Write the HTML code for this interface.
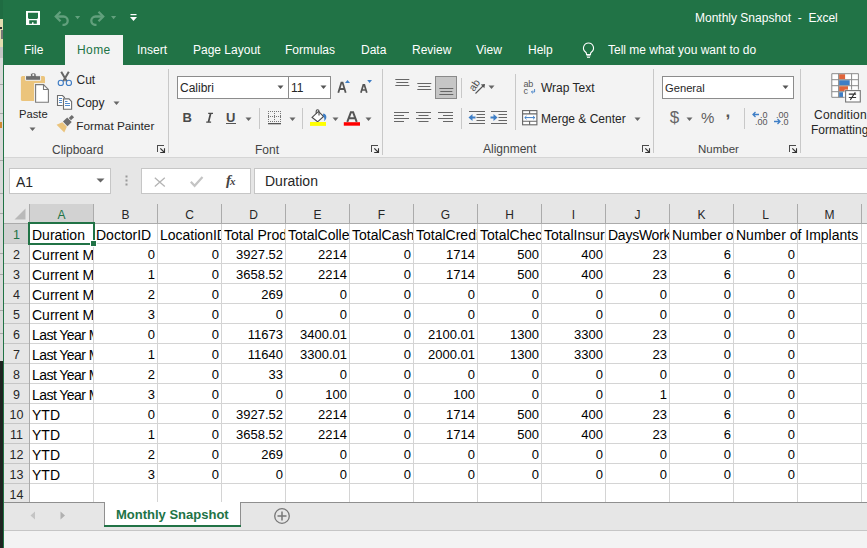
<!DOCTYPE html>
<html><head><meta charset="utf-8">
<style>
*{margin:0;padding:0;box-sizing:border-box}
html,body{width:867px;height:548px;overflow:hidden;background:#f3f3f3;font-family:"Liberation Sans",sans-serif;color:#262626}
.a{position:absolute}
#left{position:absolute;left:0;top:0;width:3px;height:548px;background:#dadada}
#gline{position:absolute;left:3px;top:0;width:1px;height:548px;background:#217346}
#title{position:absolute;left:4px;top:0;width:863px;height:65px;background:#217346}
.tab{position:absolute;top:42px;font-size:12px;color:#fff;white-space:nowrap;line-height:16px}
.rb{position:absolute;font-size:12px;color:#262626;white-space:nowrap;line-height:14px}
.gl{position:absolute;font-size:12px;color:#444;white-space:nowrap;line-height:14px}
.sep{position:absolute;width:1px;background:#c8c8c8}
#fbar{position:absolute;left:4px;top:158px;width:863px;height:46px;background:#e6e6e6}
#grid{position:absolute;left:4px;top:204px;width:863px;height:299px;background:#fff}
.t{position:absolute;height:19px;font-size:14px;line-height:19px;color:#000;white-space:nowrap;font-family:"Liberation Sans",sans-serif}
.cl{overflow:hidden;padding-left:2px}
.r{text-align:right;padding-right:2px;font-size:13px}
.hd{position:absolute;font-size:14px;line-height:19px;color:#262626;text-align:center}
</style></head><body>
<div id="left"></div>
<div class="a" style="left:0;top:0;width:3px;height:19px;background:#1f6c42"></div>
<div class="a" style="left:0;top:19px;width:3px;height:28px;background:#e3ddb0"></div>
<div class="a" style="left:0;top:27px;width:2px;height:2px;background:#333"></div>
<div class="a" style="left:1px;top:30px;width:2px;height:9px;background:#777"></div>
<div class="a" style="left:0;top:47px;width:3px;height:11px;background:#c4c4c4"></div>
<div class="a" style="left:0;top:361px;width:3px;height:187px;background:#1f2421"></div>
<div class="a" style="left:0;top:84px;width:3px;height:1px;background:#a8a8a8"></div>
<div class="a" style="left:0;top:113px;width:3px;height:1px;background:#a8a8a8"></div>
<div class="a" style="left:0;top:160px;width:3px;height:1px;background:#a8a8a8"></div>
<div class="a" style="left:0;top:193px;width:3px;height:1px;background:#a8a8a8"></div>
<div class="a" style="left:0;top:213px;width:3px;height:1px;background:#a8a8a8"></div>
<div class="a" style="left:0;top:253px;width:3px;height:1px;background:#a8a8a8"></div>
<div class="a" style="left:0;top:274px;width:3px;height:1px;background:#a8a8a8"></div>
<div class="a" style="left:0;top:310px;width:3px;height:1px;background:#a8a8a8"></div>
<div class="a" style="left:0;top:333px;width:3px;height:1px;background:#a8a8a8"></div>
<div class="a" style="left:0;top:122px;width:2px;height:6px;background:#d08a30"></div>

<div id="title"></div>
<div id="gline"></div>
<!-- QAT -->
<svg class="a" style="left:26px;top:11px" width="14" height="14" viewBox="0 0 14 14">
 <rect x="0" y="0" width="14" height="14" fill="#fff"/>
 <path d="M2 1.8h10v5.2l-1 1h-8l-1-1z" fill="#217346"/>
 <path d="M3.2 9.2h7.6v3.5h-3.3v-1.5h-1.5v1.5h-2.8z" fill="#217346"/>
</svg>
<svg class="a" style="left:53px;top:10px" width="30" height="16" viewBox="0 0 30 16">
 <path d="M3 6.5h7.5a4.2 4.2 0 0 1 0 8.4h-1" fill="none" stroke="#62a07d" stroke-width="2.3"/>
 <path d="M7.5 1.8L2.8 6.5 7.5 11.2" fill="none" stroke="#62a07d" stroke-width="2.3"/>
 <path d="M22 6h5.2l-2.6 3.2z" fill="#62a07d"/>
</svg>
<svg class="a" style="left:90px;top:10px" width="30" height="16" viewBox="0 0 30 16">
 <path d="M13 6.5h-7.5a4.2 4.2 0 0 0 0 8.4h1" fill="none" stroke="#62a07d" stroke-width="2.3"/>
 <path d="M8.5 1.8l4.7 4.7-4.7 4.7" fill="none" stroke="#62a07d" stroke-width="2.3"/>
 <path d="M21 6h5.2l-2.6 3.2z" fill="#62a07d"/>
</svg>
<svg class="a" style="left:130px;top:14px" width="8" height="8" viewBox="0 0 8 8">
 <rect x="0.5" y="0" width="6" height="1.2" fill="#fff"/><path d="M0 3h7l-3.5 4z" fill="#fff"/>
</svg>
<div class="a" style="left:695px;top:10px;font-size:12px;color:#fff;white-space:pre;line-height:16px">Monthly Snapshot  -  Excel</div>
<!-- tabs -->
<div class="a" style="left:65px;top:35px;width:58px;height:31px;background:#f3f3f3"></div>
<div class="tab" style="left:24px">File</div>
<div class="tab" style="left:77px;color:#217346;letter-spacing:0.4px">Home</div>
<div class="tab" style="left:137px">Insert</div>
<div class="tab" style="left:193px">Page Layout</div>
<div class="tab" style="left:285px">Formulas</div>
<div class="tab" style="left:361px">Data</div>
<div class="tab" style="left:412px">Review</div>
<div class="tab" style="left:476px">View</div>
<div class="tab" style="left:528px">Help</div>
<svg class="a" style="left:581px;top:42px" width="15" height="16" viewBox="0 0 15 16">
 <path d="M7.5 1a5 5 0 0 0-3 9c.6.5 1 1.2 1 2v.5h4V12c0-.8.4-1.5 1-2a5 5 0 0 0-3-9z" fill="none" stroke="#fff" stroke-width="1.1"/>
 <path d="M5.5 13.8h4M6 15.3h3" stroke="#fff" stroke-width="1"/>
</svg>
<div class="tab" style="left:608px">Tell me what you want to do</div>
<!-- ribbon bottom -->
<div class="a" style="left:4px;top:157px;width:863px;height:1px;background:#d5d5d5"></div>
<!-- Clipboard group -->
<svg class="a" style="left:16px;top:68px" width="36" height="38" viewBox="0 0 36 38">
 <rect x="4.9" y="8" width="24.1" height="25" rx="1.6" fill="#ebc47c"/>
 <path d="M9.5 7.7h5v-1.2a1.6 1.6 0 0 1 1.6-1.6h2.4a1.6 1.6 0 0 1 1.6 1.6v1.2h4.5v4.6h-15z" fill="#6d6d6d" stroke="#f3f3f3" stroke-width="1"/>
 <circle cx="17.3" cy="7" r="1.1" fill="#f3f3f3"/>
 <rect x="18.1" y="15.1" width="15.8" height="20.6" fill="#f3f3f3"/>
 <path d="M19.6 16.6h7.9l4.9 4.9v12.7h-12.8z" fill="#fff" stroke="#7a7a7a" stroke-width="1.1"/>
 <path d="M27.5 16.6v4.9h4.9" fill="none" stroke="#7a7a7a" stroke-width="1.1"/>
</svg>
<div class="rb" style="left:19px;top:107.3px;font-size:11.2px">Paste</div>
<svg class="a" style="left:29px;top:127px" width="7" height="5"><path d="M0.5 0.5h6l-3 3.5z" fill="#666"/></svg>
<svg class="a" style="left:57px;top:70px" width="17" height="18" viewBox="0 0 17 18">
 <path d="M4.2 1.8l5.6 9.4M11.8 1.8l-5.6 9.4" stroke="#666" stroke-width="2"/>
 <circle cx="3.8" cy="12.9" r="2.6" fill="#f3f3f3" stroke="#3f7cc4" stroke-width="1.1"/>
 <circle cx="11.9" cy="12.9" r="2.6" fill="#f3f3f3" stroke="#3f7cc4" stroke-width="1.1"/>
</svg>
<div class="rb" style="left:76.5px;top:72.6px">Cut</div>
<svg class="a" style="left:56px;top:94px" width="18" height="16" viewBox="0 0 18 16">
 <path d="M1.5 1.5h5l2 2v8h-7z" fill="#fff" stroke="#6e6e6e" stroke-width="1.1"/>
 <path d="M3 4.5h3M3 6.5h3M3 8.5h3" stroke="#3e7ec6" stroke-width="0.9"/>
 <rect x="6.6" y="4" width="10" height="11.2" fill="#f3f3f3"/>
 <path d="M7.5 4.9h5.5l2.6 2.6v7.7h-8.1z" fill="#fff" stroke="#6e6e6e" stroke-width="1.1"/>
 <path d="M9 7.5h2.5M9 9.5h5M9 11.5h5" stroke="#3e7ec6" stroke-width="0.9"/>
</svg>
<div class="rb" style="left:76.5px;top:95.6px">Copy</div>
<svg class="a" style="left:113px;top:101px" width="7" height="5"><path d="M0.5 0.5h6l-3 3.5z" fill="#666"/></svg>
<svg class="a" style="left:52px;top:110px" width="26" height="26" viewBox="0 0 26 26">
 <g transform="translate(13.5 13.6) rotate(45)">
  <rect x="-1.6" y="-10.5" width="3.2" height="4.3" fill="#6d6d6d"/>
  <rect x="-3.2" y="-5.6" width="6.4" height="6" fill="#6d6d6d"/>
  <path d="M-3.2 1.2h6.4l2.2 6h-10.8z" fill="#ebc47c"/>
 </g>
</svg>
<div class="rb" style="left:76.3px;top:119px;font-size:11.8px">Format Painter</div>
<div class="gl" style="left:52px;top:142.5px">Clipboard</div>
<svg class="a" style="left:156px;top:144px" width="10" height="10" viewBox="0 0 10 10">
 <rect x="1" y="1" width="7" height="1" fill="#4a4a4a"/><rect x="1" y="1" width="1" height="7" fill="#4a4a4a"/><path d="M4.3 4.3l3.7 3.7" stroke="#333" stroke-width="1.1"/><path d="M8.5 4.2v4.3h-4.3" fill="none" stroke="#333" stroke-width="1.1"/>
</svg>
<div class="sep" style="left:168px;top:69px;height:84px"></div>

<!-- Font group -->
<div class="a" style="left:177px;top:76px;width:112px;height:23px;background:#fff;border:1px solid #8c8c8c"></div>
<div class="a" style="left:288px;top:76px;width:43px;height:23px;background:#fff;border:1px solid #8c8c8c"></div>
<div class="rb" style="left:180px;top:81px">Calibri</div>
<div class="rb" style="left:291px;top:81px">11</div>
<svg class="a" style="left:277px;top:85px" width="7" height="5"><path d="M0.5 0.5h6l-3 3.5z" fill="#555"/></svg>
<svg class="a" style="left:320px;top:85px" width="7" height="5"><path d="M0.5 0.5h6l-3 3.5z" fill="#555"/></svg>
<svg class="a" style="left:336px;top:79px" width="16" height="16" viewBox="0 0 16 16">
 <path d="M2.3 13.8L5.4 3.6h1.2l3.1 10.2M3.6 10h4.8" fill="none" stroke="#555" stroke-width="1.8"/>
 <path d="M9 4h5l-2.5-2.9z" fill="#3e7ec6"/>
</svg>
<svg class="a" style="left:358px;top:79px" width="16" height="16" viewBox="0 0 16 16">
 <path d="M2.9 13.8l2.4-7.9h1.1l2.4 7.9M3.9 11h3.9" fill="none" stroke="#555" stroke-width="1.7"/>
 <path d="M9.2 1.1h4.8l-2.4 2.8z" fill="#3e7ec6"/>
</svg>
<div class="a" style="left:182.5px;top:110px;font-size:13px;font-weight:bold;color:#4a4a4a;line-height:16px">B</div>
<svg class="a" style="left:204px;top:111px" width="11" height="12" viewBox="0 0 11 12"><path d="M4.2 1.8h4.8v1.2h-1.6l-1.9 7.6h1.6v1.2h-4.9v-1.2h1.5l1.9-7.6h-1.4z" fill="#4a4a4a"/></svg>
<div class="a" style="left:226px;top:109.5px;font-size:13px;color:#4a4a4a;line-height:16px;font-weight:bold">U</div>
<div class="a" style="left:226px;top:123px;width:10px;height:1.2px;background:#555"></div>
<svg class="a" style="left:245px;top:117px" width="7" height="5"><path d="M0.5 0.5h6l-3 3.5z" fill="#666"/></svg>
<div class="sep" style="left:259px;top:108px;height:21px"></div>
<svg class="a" style="left:268px;top:111px" width="14" height="14" viewBox="0 0 14 14"><g fill="#777"><rect x="0" y="0" width="1" height="1"/><rect x="2" y="0" width="1" height="1"/><rect x="4" y="0" width="1" height="1"/><rect x="6" y="0" width="1" height="1"/><rect x="8" y="0" width="1" height="1"/><rect x="10" y="0" width="1" height="1"/><rect x="12" y="0" width="1" height="1"/><rect x="0" y="2" width="1" height="1"/><rect x="6" y="2" width="1" height="1"/><rect x="12" y="2" width="1" height="1"/><rect x="0" y="4" width="1" height="1"/><rect x="6" y="4" width="1" height="1"/><rect x="12" y="4" width="1" height="1"/><rect x="0" y="5" width="1" height="1"/><rect x="2" y="5" width="1" height="1"/><rect x="4" y="5" width="1" height="1"/><rect x="6" y="5" width="1" height="1"/><rect x="8" y="5" width="1" height="1"/><rect x="10" y="5" width="1" height="1"/><rect x="12" y="5" width="1" height="1"/><rect x="0" y="6" width="1" height="1"/><rect x="6" y="6" width="1" height="1"/><rect x="12" y="6" width="1" height="1"/><rect x="0" y="8" width="1" height="1"/><rect x="6" y="8" width="1" height="1"/><rect x="12" y="8" width="1" height="1"/><rect x="0" y="10" width="1" height="1"/><rect x="2" y="10" width="1" height="1"/><rect x="4" y="10" width="1" height="1"/><rect x="6" y="10" width="1" height="1"/><rect x="8" y="10" width="1" height="1"/><rect x="10" y="10" width="1" height="1"/><rect x="12" y="10" width="1" height="1"/></g><rect x="0" y="12" width="13" height="1.3" fill="#555"/></svg>
<svg class="a" style="left:289px;top:117px" width="7" height="5"><path d="M0.5 0.5h6l-3 3.5z" fill="#666"/></svg>
<div class="sep" style="left:302px;top:108px;height:21px"></div>
<svg class="a" style="left:306px;top:104px" width="24" height="24" viewBox="0 0 24 24">
 <path d="M6.1 13.4L12.5 7.4 17.6 12.5 11.6 17.8z" fill="#fff" stroke="#4a4a4a" stroke-width="1.1"/>
 <path d="M10.2 9.8v-2.6a1.4 1.4 0 0 1 2.8 0v4.3" fill="none" stroke="#4a4a4a" stroke-width="1.1"/>
 <path d="M17.2 9.6c2.6 0.4 3.8 2.6 2.8 5.4l-1.8 2.2c0.4-2 0.2-4.2-1.2-5.4z" fill="#3e7ec6"/>
 <rect x="4" y="18" width="16" height="3.9" fill="#ff0"/>
</svg>
<svg class="a" style="left:332px;top:117px" width="7" height="5"><path d="M0.5 0.5h6l-3 3.5z" fill="#666"/></svg>
<svg class="a" style="left:343px;top:109px" width="18" height="18" viewBox="0 0 18 18">
 <path d="M4.3 12.8l3.6-9.6h2.2l3.6 9.6M5.8 9.2h6.4" fill="none" stroke="#555" stroke-width="2"/>
 <rect x="0.8" y="13.2" width="16.2" height="3.5" fill="#f00"/>
</svg>
<svg class="a" style="left:365px;top:117px" width="7" height="5"><path d="M0.5 0.5h6l-3 3.5z" fill="#666"/></svg>
<div class="gl" style="left:255px;top:142.5px">Font</div>
<svg class="a" style="left:370px;top:144px" width="10" height="10" viewBox="0 0 10 10">
 <rect x="1" y="1" width="7" height="1" fill="#4a4a4a"/><rect x="1" y="1" width="1" height="7" fill="#4a4a4a"/><path d="M4.3 4.3l3.7 3.7" stroke="#333" stroke-width="1.1"/><path d="M8.5 4.2v4.3h-4.3" fill="none" stroke="#333" stroke-width="1.1"/>
</svg>
<div class="sep" style="left:382px;top:69px;height:86px"></div>
<!-- Alignment group -->
<svg class="a" style="left:394px;top:78px" width="16" height="10" viewBox="0 0 16 10">
 <path d="M1.3 1.5h14M2.3 4.5h12M1.3 7.5h14" stroke="#666" stroke-width="1"/>
</svg>
<svg class="a" style="left:416px;top:81px" width="16" height="11" viewBox="0 0 16 11">
 <path d="M1.3 2.5h14M2.3 5.5h12M1.3 8.5h14" stroke="#666" stroke-width="1"/>
</svg>
<div class="a" style="left:435px;top:76px;width:22px;height:23px;background:#c6c6c6;border:1px solid #8a8a8a"></div>
<svg class="a" style="left:438px;top:86px" width="16" height="11" viewBox="0 0 16 11">
 <path d="M1.3 2.5h14M2.3 5.5h12M1.3 8.5h14" stroke="#666" stroke-width="1"/>
</svg>
<div class="sep" style="left:461px;top:78px;height:20px"></div>
<svg class="a" style="left:466px;top:76px" width="22" height="20" viewBox="0 0 22 20">
 <text x="0" y="0" font-family="Liberation Sans" font-size="10.5" fill="#4d4d4d" transform="translate(8 16) rotate(-55)">ab</text>
 <path d="M9.5 17.5l8.5-8.5" fill="none" stroke="#555" stroke-width="1.1"/>
 <path d="M19 8l-4.2 0.6 3.6 3.6z" fill="#555"/>
</svg>
<svg class="a" style="left:488px;top:85px" width="7" height="5"><path d="M0.5 0.5h6l-3 3.5z" fill="#666"/></svg>
<div class="sep" style="left:515px;top:74px;height:56px"></div>
<svg class="a" style="left:522px;top:78px" width="16" height="18" viewBox="0 0 16 18">
 <text x="1.5" y="8.8" font-family="Liberation Sans" font-size="9" fill="#555" letter-spacing="-0.3">ab</text>
 <text x="1.6" y="15.7" font-family="Liberation Sans" font-size="9" fill="#555">c</text>
 <path d="M12.6 11v3h-3M10.8 12.6l-1.4 1.4 1.4 1.4" fill="none" stroke="#3e7ec6" stroke-width="0.9"/>
</svg>
<div class="rb" style="left:541px;top:81.1px">Wrap Text</div>
<svg class="a" style="left:394px;top:111px" width="16" height="13" viewBox="0 0 16 13">
 <path d="M0 1.5h15M0 4.5h10M0 7.5h15M0 10.5h10" stroke="#666" stroke-width="1"/>
</svg>
<svg class="a" style="left:416px;top:111px" width="16" height="13" viewBox="0 0 16 13">
 <path d="M0 1.5h15M2.5 4.5h10M0 7.5h15M2.5 10.5h10" stroke="#666" stroke-width="1"/>
</svg>
<svg class="a" style="left:438px;top:111px" width="16" height="13" viewBox="0 0 16 13">
 <path d="M0 1.5h15M5 4.5h10M0 7.5h15M5 10.5h10" stroke="#666" stroke-width="1"/>
</svg>
<div class="sep" style="left:461px;top:108px;height:21px"></div>
<svg class="a" style="left:468px;top:110px" width="18" height="15" viewBox="0 0 18 15">
 <path d="M1 1.5h16M8.5 4.5h8.5M8.5 7.5h8.5M8.5 10.5h8.5M1 13.5h16" stroke="#666" stroke-width="1"/>
 <path d="M4 7.5h3.5" stroke="#3e7ec6" stroke-width="2"/><path d="M0.5 7.5l4-3.5v7z" fill="#3e7ec6"/>
</svg>
<svg class="a" style="left:490px;top:110px" width="18" height="15" viewBox="0 0 18 15">
 <path d="M1 1.5h16M8.5 4.5h8.5M8.5 7.5h8.5M8.5 10.5h8.5M1 13.5h16" stroke="#666" stroke-width="1"/>
 <path d="M0.5 7.5h3.5" stroke="#3e7ec6" stroke-width="2"/><path d="M7.5 7.5l-4-3.5v7z" fill="#3e7ec6"/>
</svg>
<svg class="a" style="left:521px;top:109px" width="18" height="17" viewBox="0 0 18 17">
 <rect x="1.6" y="1.6" width="14.3" height="14.2" fill="#fff" stroke="#666" stroke-width="1.1"/>
 <path d="M1.6 4.9h14.3M1.6 12.3h14.3M8.6 1.6v3.3M8.6 12.3v3.5" stroke="#666" stroke-width="1.1"/>
 <path d="M3.8 8.6h10M5.5 7l-1.7 1.6 1.7 1.6M12.1 7l1.7 1.6-1.7 1.6" fill="none" stroke="#3e7ec6" stroke-width="1"/>
</svg>
<div class="rb" style="left:541px;top:112.1px">Merge &amp; Center</div>
<svg class="a" style="left:634px;top:117px" width="7" height="5"><path d="M0.5 0.5h6l-3 3.5z" fill="#666"/></svg>
<div class="gl" style="left:483px;top:141.5px">Alignment</div>
<svg class="a" style="left:641px;top:144px" width="10" height="10" viewBox="0 0 10 10">
 <rect x="1" y="1" width="7" height="1" fill="#4a4a4a"/><rect x="1" y="1" width="1" height="7" fill="#4a4a4a"/><path d="M4.3 4.3l3.7 3.7" stroke="#333" stroke-width="1.1"/><path d="M8.5 4.2v4.3h-4.3" fill="none" stroke="#333" stroke-width="1.1"/>
</svg>
<div class="sep" style="left:653px;top:69px;height:84px"></div>

<!-- Number group -->
<div class="a" style="left:662px;top:76px;width:132px;height:23px;background:#fff;border:1px solid #8c8c8c"></div>
<div class="rb" style="left:665px;top:81.3px;font-size:11.2px">General</div>
<svg class="a" style="left:782px;top:85px" width="7" height="5"><path d="M0.5 0.5h6l-3 3.5z" fill="#555"/></svg>
<div class="a" style="left:669.8px;top:108px;font-size:17px;color:#666;line-height:20px">$</div>
<svg class="a" style="left:686px;top:117px" width="7" height="5"><path d="M0.5 0.5h6l-3 3.5z" fill="#666"/></svg>
<div class="a" style="left:701px;top:107.5px;font-size:15px;color:#5e5e5e;line-height:20px">%</div>
<div class="a" style="left:725.6px;top:102px;font-size:17px;color:#555;line-height:20px;font-weight:bold">,</div>
<div class="sep" style="left:744px;top:108px;height:21px"></div>
<svg class="a" style="left:751.5px;top:110px" width="18" height="16" viewBox="0 0 18 16">
 <path d="M1 4.5h6M3.5 2l-2.5 2.5 2.5 2.5" fill="none" stroke="#3e7ec6" stroke-width="1.3"/>
 <text x="8" y="8" font-family="Liberation Sans" font-size="9" fill="#555">.0</text>
 <text x="3" y="15" font-family="Liberation Sans" font-size="9" fill="#555">.00</text>
</svg>
<svg class="a" style="left:773px;top:110px" width="18" height="16" viewBox="0 0 18 16">
 <text x="3" y="8" font-family="Liberation Sans" font-size="9" fill="#555">.00</text>
 <path d="M1 11.5h6M4.5 9l2.5 2.5-2.5 2.5" fill="none" stroke="#3e7ec6" stroke-width="1.3"/>
 <text x="8" y="15" font-family="Liberation Sans" font-size="9" fill="#555">.0</text>
</svg>
<div class="gl" style="left:698px;top:141.9px;font-size:11.5px">Number</div>
<svg class="a" style="left:788px;top:144px" width="10" height="10" viewBox="0 0 10 10">
 <rect x="1" y="1" width="7" height="1" fill="#4a4a4a"/><rect x="1" y="1" width="1" height="7" fill="#4a4a4a"/><path d="M4.3 4.3l3.7 3.7" stroke="#333" stroke-width="1.1"/><path d="M8.5 4.2v4.3h-4.3" fill="none" stroke="#333" stroke-width="1.1"/>
</svg>
<div class="sep" style="left:800px;top:69px;height:84px"></div>
<!-- Conditional formatting -->
<svg class="a" style="left:830px;top:72px" width="34" height="34" viewBox="0 0 34 34">
 <rect x="1.8" y="1.7" width="26.6" height="23.6" fill="#fff"/>
 <rect x="9.1" y="2.2" width="6" height="5" fill="#e0643a"/>
 <rect x="9.1" y="8.2" width="10.6" height="5" fill="#3e7ec6"/>
 <rect x="9.1" y="14.2" width="8.9" height="5" fill="#e0643a"/>
 <rect x="9.1" y="20.2" width="3.9" height="5" fill="#3e7ec6"/>
 <path d="M1.8 1.7h26.6v23.6h-26.6zM1.8 7.7h26.6M1.8 13.7h26.6M1.8 19.7h26.6M8.6 1.7v23.6M21.6 1.7v23.6" fill="none" stroke="#8a8a8a" stroke-width="1"/>
 <rect x="14.6" y="17.6" width="16.7" height="13.4" fill="#f3f3f3"/>
 <rect x="15.6" y="18.6" width="14.7" height="11.4" fill="#fff" stroke="#777" stroke-width="1.1"/>
 <path d="M18.8 22.1h7.3M18.8 25.5h7.3M25.3 20.3l-5 7.6" stroke="#333" stroke-width="1.1"/>
</svg>
<div class="rb" style="left:814px;top:107.6px;letter-spacing:0.25px">Conditional</div>
<div class="rb" style="left:811px;top:123.1px">Formatting</div>
<div id="fbar"></div>
<div class="a" style="left:9px;top:168px;width:102px;height:26px;background:#fff;border:1px solid #c6c6c6"></div>
<div class="a" style="left:16px;top:173.6px;font-size:14px;line-height:16px;color:#262626">A1</div>
<svg class="a" style="left:96px;top:178px" width="9" height="5"><path d="M0.5 0.5h8l-4 4z" fill="#666"/></svg>
<svg class="a" style="left:124.5px;top:175px" width="3" height="12"><rect x="0.5" y="0.5" width="2" height="2" fill="#999"/><rect x="0.5" y="4.5" width="2" height="2" fill="#999"/><rect x="0.5" y="8.5" width="2" height="2" fill="#999"/></svg>
<div class="a" style="left:141px;top:168px;width:110px;height:26px;background:#fff;border:1px solid #c6c6c6"></div>
<svg class="a" style="left:153px;top:176px" width="14" height="12"><path d="M1.8 1.8l10 8.6M11.8 1.8l-10 8.6" stroke="#b4b4b4" stroke-width="1.3"/></svg>
<svg class="a" style="left:189px;top:175px" width="15" height="13"><path d="M1.8 6.8l3.8 4L13.5 2" fill="none" stroke="#c4c4c4" stroke-width="2.2"/></svg>
<div class="a" style="left:226px;top:172px;font-size:15px;line-height:16px;color:#444;font-family:'Liberation Serif',serif;font-style:italic;font-weight:bold">f<span style="font-size:11px;margin-left:-1px">x</span></div>
<div class="a" style="left:254px;top:168px;width:620px;height:26px;background:#fff;border:1px solid #c6c6c6"></div>
<div class="a" style="left:265px;top:173px;font-size:14px;line-height:16px;color:#262626">Duration</div>
<div id="grid"></div>
<div class="a" style="left:4px;top:204px;width:863px;height:19px;background:#e6e6e6"></div>
<div class="a" style="left:4px;top:204px;width:25px;height:299px;background:#e6e6e6"></div>
<div class="a" style="left:30px;top:204px;width:63px;height:19px;background:#d2d2d2"></div>
<div class="a" style="left:4px;top:224px;width:25px;height:19px;background:#d2d2d2"></div>
<svg class="a" style="left:14px;top:208px" width="12" height="12"><path d="M11.5 0.5v11h-11z" fill="#b9b9b9"/></svg>
<div class="a" style="left:4px;top:223px;width:863px;height:1px;background:#ababab"></div>
<div class="a" style="left:29px;top:204px;width:1px;height:299px;background:#ababab"></div>
<div class="a" style="left:93px;top:204px;width:1px;height:19px;background:#ababab"></div>
<div class="a" style="left:93px;top:224px;width:1px;height:279px;background:#d4d4d4"></div>
<div class="a" style="left:157px;top:204px;width:1px;height:19px;background:#ababab"></div>
<div class="a" style="left:157px;top:224px;width:1px;height:279px;background:#d4d4d4"></div>
<div class="a" style="left:221px;top:204px;width:1px;height:19px;background:#ababab"></div>
<div class="a" style="left:221px;top:224px;width:1px;height:279px;background:#d4d4d4"></div>
<div class="a" style="left:285px;top:204px;width:1px;height:19px;background:#ababab"></div>
<div class="a" style="left:285px;top:224px;width:1px;height:279px;background:#d4d4d4"></div>
<div class="a" style="left:349px;top:204px;width:1px;height:19px;background:#ababab"></div>
<div class="a" style="left:349px;top:224px;width:1px;height:279px;background:#d4d4d4"></div>
<div class="a" style="left:413px;top:204px;width:1px;height:19px;background:#ababab"></div>
<div class="a" style="left:413px;top:224px;width:1px;height:279px;background:#d4d4d4"></div>
<div class="a" style="left:477px;top:204px;width:1px;height:19px;background:#ababab"></div>
<div class="a" style="left:477px;top:224px;width:1px;height:279px;background:#d4d4d4"></div>
<div class="a" style="left:541px;top:204px;width:1px;height:19px;background:#ababab"></div>
<div class="a" style="left:541px;top:224px;width:1px;height:279px;background:#d4d4d4"></div>
<div class="a" style="left:605px;top:204px;width:1px;height:19px;background:#ababab"></div>
<div class="a" style="left:605px;top:224px;width:1px;height:279px;background:#d4d4d4"></div>
<div class="a" style="left:669px;top:204px;width:1px;height:19px;background:#ababab"></div>
<div class="a" style="left:669px;top:224px;width:1px;height:279px;background:#d4d4d4"></div>
<div class="a" style="left:733px;top:204px;width:1px;height:19px;background:#ababab"></div>
<div class="a" style="left:733px;top:224px;width:1px;height:279px;background:#d4d4d4"></div>
<div class="a" style="left:797px;top:204px;width:1px;height:19px;background:#ababab"></div>
<div class="a" style="left:797px;top:224px;width:1px;height:279px;background:#d4d4d4"></div>
<div class="a" style="left:861px;top:204px;width:1px;height:19px;background:#ababab"></div>
<div class="a" style="left:861px;top:224px;width:1px;height:279px;background:#d4d4d4"></div>
<div class="a" style="left:4px;top:243px;width:25px;height:1px;background:#c6c6c6"></div>
<div class="a" style="left:30px;top:243px;width:837px;height:1px;background:#d4d4d4"></div>
<div class="a" style="left:4px;top:263px;width:25px;height:1px;background:#c6c6c6"></div>
<div class="a" style="left:30px;top:263px;width:837px;height:1px;background:#d4d4d4"></div>
<div class="a" style="left:4px;top:283px;width:25px;height:1px;background:#c6c6c6"></div>
<div class="a" style="left:30px;top:283px;width:837px;height:1px;background:#d4d4d4"></div>
<div class="a" style="left:4px;top:303px;width:25px;height:1px;background:#c6c6c6"></div>
<div class="a" style="left:30px;top:303px;width:837px;height:1px;background:#d4d4d4"></div>
<div class="a" style="left:4px;top:323px;width:25px;height:1px;background:#c6c6c6"></div>
<div class="a" style="left:30px;top:323px;width:837px;height:1px;background:#d4d4d4"></div>
<div class="a" style="left:4px;top:343px;width:25px;height:1px;background:#c6c6c6"></div>
<div class="a" style="left:30px;top:343px;width:837px;height:1px;background:#d4d4d4"></div>
<div class="a" style="left:4px;top:363px;width:25px;height:1px;background:#c6c6c6"></div>
<div class="a" style="left:30px;top:363px;width:837px;height:1px;background:#d4d4d4"></div>
<div class="a" style="left:4px;top:383px;width:25px;height:1px;background:#c6c6c6"></div>
<div class="a" style="left:30px;top:383px;width:837px;height:1px;background:#d4d4d4"></div>
<div class="a" style="left:4px;top:403px;width:25px;height:1px;background:#c6c6c6"></div>
<div class="a" style="left:30px;top:403px;width:837px;height:1px;background:#d4d4d4"></div>
<div class="a" style="left:4px;top:423px;width:25px;height:1px;background:#c6c6c6"></div>
<div class="a" style="left:30px;top:423px;width:837px;height:1px;background:#d4d4d4"></div>
<div class="a" style="left:4px;top:443px;width:25px;height:1px;background:#c6c6c6"></div>
<div class="a" style="left:30px;top:443px;width:837px;height:1px;background:#d4d4d4"></div>
<div class="a" style="left:4px;top:463px;width:25px;height:1px;background:#c6c6c6"></div>
<div class="a" style="left:30px;top:463px;width:837px;height:1px;background:#d4d4d4"></div>
<div class="a" style="left:4px;top:483px;width:25px;height:1px;background:#c6c6c6"></div>
<div class="a" style="left:30px;top:483px;width:837px;height:1px;background:#d4d4d4"></div>
<div class="a" style="left:4px;top:503px;width:25px;height:1px;background:#c6c6c6"></div>
<div class="a" style="left:30px;top:503px;width:837px;height:1px;background:#d4d4d4"></div>
<div class="hd" style="left:30px;top:206px;width:63px;font-size:12px;color:#217346">A</div>
<div class="hd" style="left:94px;top:206px;width:63px;font-size:12px;color:#262626">B</div>
<div class="hd" style="left:158px;top:206px;width:63px;font-size:12px;color:#262626">C</div>
<div class="hd" style="left:222px;top:206px;width:63px;font-size:12px;color:#262626">D</div>
<div class="hd" style="left:286px;top:206px;width:63px;font-size:12px;color:#262626">E</div>
<div class="hd" style="left:350px;top:206px;width:63px;font-size:12px;color:#262626">F</div>
<div class="hd" style="left:414px;top:206px;width:63px;font-size:12px;color:#262626">G</div>
<div class="hd" style="left:478px;top:206px;width:63px;font-size:12px;color:#262626">H</div>
<div class="hd" style="left:542px;top:206px;width:63px;font-size:12px;color:#262626">I</div>
<div class="hd" style="left:606px;top:206px;width:63px;font-size:12px;color:#262626">J</div>
<div class="hd" style="left:670px;top:206px;width:63px;font-size:12px;color:#262626">K</div>
<div class="hd" style="left:734px;top:206px;width:63px;font-size:12px;color:#262626">L</div>
<div class="hd" style="left:798px;top:206px;width:63px;font-size:12px;color:#262626">M</div>
<div class="hd" style="left:4px;top:226px;width:25px;font-size:12.5px;color:#217346">1</div>
<div class="hd" style="left:4px;top:246px;width:25px;font-size:12.5px;color:#262626">2</div>
<div class="hd" style="left:4px;top:266px;width:25px;font-size:12.5px;color:#262626">3</div>
<div class="hd" style="left:4px;top:286px;width:25px;font-size:12.5px;color:#262626">4</div>
<div class="hd" style="left:4px;top:306px;width:25px;font-size:12.5px;color:#262626">5</div>
<div class="hd" style="left:4px;top:326px;width:25px;font-size:12.5px;color:#262626">6</div>
<div class="hd" style="left:4px;top:346px;width:25px;font-size:12.5px;color:#262626">7</div>
<div class="hd" style="left:4px;top:366px;width:25px;font-size:12.5px;color:#262626">8</div>
<div class="hd" style="left:4px;top:386px;width:25px;font-size:12.5px;color:#262626">9</div>
<div class="hd" style="left:4px;top:406px;width:25px;font-size:12.5px;color:#262626">10</div>
<div class="hd" style="left:4px;top:426px;width:25px;font-size:12.5px;color:#262626">11</div>
<div class="hd" style="left:4px;top:446px;width:25px;font-size:12.5px;color:#262626">12</div>
<div class="hd" style="left:4px;top:466px;width:25px;font-size:12.5px;color:#262626">13</div>
<div class="hd" style="left:4px;top:486px;width:25px;font-size:12.5px;color:#262626">14</div>
<div class="t cl" style="left:30px;top:226.0px;width:63px"><span>Duration</span></div>
<div class="t cl" style="left:94px;top:226.0px;width:63px"><span>DoctorID</span></div>
<div class="t cl" style="left:158px;top:226.0px;width:63px"><span>LocationID</span></div>
<div class="t cl" style="left:222px;top:226.0px;width:63px"><span>Total Production</span></div>
<div class="t cl" style="left:286px;top:226.0px;width:63px"><span>TotalCollections</span></div>
<div class="t cl" style="left:350px;top:226.0px;width:63px"><span>TotalCash</span></div>
<div class="t cl" style="left:414px;top:226.0px;width:63px"><span>TotalCredit</span></div>
<div class="t cl" style="left:478px;top:226.0px;width:63px"><span>TotalCheck</span></div>
<div class="t cl" style="left:542px;top:226.0px;width:63px"><span>TotalInsurance</span></div>
<div class="t cl" style="left:606px;top:226.0px;width:63px;letter-spacing:-0.25px"><span>DaysWorked</span></div>
<div class="t cl" style="left:670px;top:226.0px;width:63px"><span>Number of</span></div>
<div class="t" style="left:734px;top:226.0px;width:130px;padding-left:2px">Number of Implants</div>
<div class="t cl" style="left:30px;top:246.0px;width:63px"><span>Current M</span></div>
<div class="t r" style="left:94px;top:245.0px;width:63px">0</div>
<div class="t r" style="left:158px;top:245.0px;width:63px">0</div>
<div class="t r" style="left:222px;top:245.0px;width:63px">3927.52</div>
<div class="t r" style="left:286px;top:245.0px;width:63px">2214</div>
<div class="t r" style="left:350px;top:245.0px;width:63px">0</div>
<div class="t r" style="left:414px;top:245.0px;width:63px">1714</div>
<div class="t r" style="left:478px;top:245.0px;width:63px">500</div>
<div class="t r" style="left:542px;top:245.0px;width:63px">400</div>
<div class="t r" style="left:606px;top:245.0px;width:63px">23</div>
<div class="t r" style="left:670px;top:245.0px;width:63px">6</div>
<div class="t r" style="left:734px;top:245.0px;width:63px">0</div>
<div class="t cl" style="left:30px;top:266.0px;width:63px"><span>Current M</span></div>
<div class="t r" style="left:94px;top:265.0px;width:63px">1</div>
<div class="t r" style="left:158px;top:265.0px;width:63px">0</div>
<div class="t r" style="left:222px;top:265.0px;width:63px">3658.52</div>
<div class="t r" style="left:286px;top:265.0px;width:63px">2214</div>
<div class="t r" style="left:350px;top:265.0px;width:63px">0</div>
<div class="t r" style="left:414px;top:265.0px;width:63px">1714</div>
<div class="t r" style="left:478px;top:265.0px;width:63px">500</div>
<div class="t r" style="left:542px;top:265.0px;width:63px">400</div>
<div class="t r" style="left:606px;top:265.0px;width:63px">23</div>
<div class="t r" style="left:670px;top:265.0px;width:63px">6</div>
<div class="t r" style="left:734px;top:265.0px;width:63px">0</div>
<div class="t cl" style="left:30px;top:286.0px;width:63px"><span>Current M</span></div>
<div class="t r" style="left:94px;top:285.0px;width:63px">2</div>
<div class="t r" style="left:158px;top:285.0px;width:63px">0</div>
<div class="t r" style="left:222px;top:285.0px;width:63px">269</div>
<div class="t r" style="left:286px;top:285.0px;width:63px">0</div>
<div class="t r" style="left:350px;top:285.0px;width:63px">0</div>
<div class="t r" style="left:414px;top:285.0px;width:63px">0</div>
<div class="t r" style="left:478px;top:285.0px;width:63px">0</div>
<div class="t r" style="left:542px;top:285.0px;width:63px">0</div>
<div class="t r" style="left:606px;top:285.0px;width:63px">0</div>
<div class="t r" style="left:670px;top:285.0px;width:63px">0</div>
<div class="t r" style="left:734px;top:285.0px;width:63px">0</div>
<div class="t cl" style="left:30px;top:306.0px;width:63px"><span>Current M</span></div>
<div class="t r" style="left:94px;top:305.0px;width:63px">3</div>
<div class="t r" style="left:158px;top:305.0px;width:63px">0</div>
<div class="t r" style="left:222px;top:305.0px;width:63px">0</div>
<div class="t r" style="left:286px;top:305.0px;width:63px">0</div>
<div class="t r" style="left:350px;top:305.0px;width:63px">0</div>
<div class="t r" style="left:414px;top:305.0px;width:63px">0</div>
<div class="t r" style="left:478px;top:305.0px;width:63px">0</div>
<div class="t r" style="left:542px;top:305.0px;width:63px">0</div>
<div class="t r" style="left:606px;top:305.0px;width:63px">0</div>
<div class="t r" style="left:670px;top:305.0px;width:63px">0</div>
<div class="t r" style="left:734px;top:305.0px;width:63px">0</div>
<div class="t cl" style="left:30px;top:326.0px;width:63px;letter-spacing:-0.55px"><span>Last Year M</span></div>
<div class="t r" style="left:94px;top:325.0px;width:63px">0</div>
<div class="t r" style="left:158px;top:325.0px;width:63px">0</div>
<div class="t r" style="left:222px;top:325.0px;width:63px">11673</div>
<div class="t r" style="left:286px;top:325.0px;width:63px">3400.01</div>
<div class="t r" style="left:350px;top:325.0px;width:63px">0</div>
<div class="t r" style="left:414px;top:325.0px;width:63px">2100.01</div>
<div class="t r" style="left:478px;top:325.0px;width:63px">1300</div>
<div class="t r" style="left:542px;top:325.0px;width:63px">3300</div>
<div class="t r" style="left:606px;top:325.0px;width:63px">23</div>
<div class="t r" style="left:670px;top:325.0px;width:63px">0</div>
<div class="t r" style="left:734px;top:325.0px;width:63px">0</div>
<div class="t cl" style="left:30px;top:346.0px;width:63px;letter-spacing:-0.55px"><span>Last Year M</span></div>
<div class="t r" style="left:94px;top:345.0px;width:63px">1</div>
<div class="t r" style="left:158px;top:345.0px;width:63px">0</div>
<div class="t r" style="left:222px;top:345.0px;width:63px">11640</div>
<div class="t r" style="left:286px;top:345.0px;width:63px">3300.01</div>
<div class="t r" style="left:350px;top:345.0px;width:63px">0</div>
<div class="t r" style="left:414px;top:345.0px;width:63px">2000.01</div>
<div class="t r" style="left:478px;top:345.0px;width:63px">1300</div>
<div class="t r" style="left:542px;top:345.0px;width:63px">3300</div>
<div class="t r" style="left:606px;top:345.0px;width:63px">23</div>
<div class="t r" style="left:670px;top:345.0px;width:63px">0</div>
<div class="t r" style="left:734px;top:345.0px;width:63px">0</div>
<div class="t cl" style="left:30px;top:366.0px;width:63px;letter-spacing:-0.55px"><span>Last Year M</span></div>
<div class="t r" style="left:94px;top:365.0px;width:63px">2</div>
<div class="t r" style="left:158px;top:365.0px;width:63px">0</div>
<div class="t r" style="left:222px;top:365.0px;width:63px">33</div>
<div class="t r" style="left:286px;top:365.0px;width:63px">0</div>
<div class="t r" style="left:350px;top:365.0px;width:63px">0</div>
<div class="t r" style="left:414px;top:365.0px;width:63px">0</div>
<div class="t r" style="left:478px;top:365.0px;width:63px">0</div>
<div class="t r" style="left:542px;top:365.0px;width:63px">0</div>
<div class="t r" style="left:606px;top:365.0px;width:63px">0</div>
<div class="t r" style="left:670px;top:365.0px;width:63px">0</div>
<div class="t r" style="left:734px;top:365.0px;width:63px">0</div>
<div class="t cl" style="left:30px;top:386.0px;width:63px;letter-spacing:-0.55px"><span>Last Year M</span></div>
<div class="t r" style="left:94px;top:385.0px;width:63px">3</div>
<div class="t r" style="left:158px;top:385.0px;width:63px">0</div>
<div class="t r" style="left:222px;top:385.0px;width:63px">0</div>
<div class="t r" style="left:286px;top:385.0px;width:63px">100</div>
<div class="t r" style="left:350px;top:385.0px;width:63px">0</div>
<div class="t r" style="left:414px;top:385.0px;width:63px">100</div>
<div class="t r" style="left:478px;top:385.0px;width:63px">0</div>
<div class="t r" style="left:542px;top:385.0px;width:63px">0</div>
<div class="t r" style="left:606px;top:385.0px;width:63px">1</div>
<div class="t r" style="left:670px;top:385.0px;width:63px">0</div>
<div class="t r" style="left:734px;top:385.0px;width:63px">0</div>
<div class="t cl" style="left:30px;top:406.0px;width:63px"><span>YTD</span></div>
<div class="t r" style="left:94px;top:405.0px;width:63px">0</div>
<div class="t r" style="left:158px;top:405.0px;width:63px">0</div>
<div class="t r" style="left:222px;top:405.0px;width:63px">3927.52</div>
<div class="t r" style="left:286px;top:405.0px;width:63px">2214</div>
<div class="t r" style="left:350px;top:405.0px;width:63px">0</div>
<div class="t r" style="left:414px;top:405.0px;width:63px">1714</div>
<div class="t r" style="left:478px;top:405.0px;width:63px">500</div>
<div class="t r" style="left:542px;top:405.0px;width:63px">400</div>
<div class="t r" style="left:606px;top:405.0px;width:63px">23</div>
<div class="t r" style="left:670px;top:405.0px;width:63px">6</div>
<div class="t r" style="left:734px;top:405.0px;width:63px">0</div>
<div class="t cl" style="left:30px;top:426.0px;width:63px"><span>YTD</span></div>
<div class="t r" style="left:94px;top:425.0px;width:63px">1</div>
<div class="t r" style="left:158px;top:425.0px;width:63px">0</div>
<div class="t r" style="left:222px;top:425.0px;width:63px">3658.52</div>
<div class="t r" style="left:286px;top:425.0px;width:63px">2214</div>
<div class="t r" style="left:350px;top:425.0px;width:63px">0</div>
<div class="t r" style="left:414px;top:425.0px;width:63px">1714</div>
<div class="t r" style="left:478px;top:425.0px;width:63px">500</div>
<div class="t r" style="left:542px;top:425.0px;width:63px">400</div>
<div class="t r" style="left:606px;top:425.0px;width:63px">23</div>
<div class="t r" style="left:670px;top:425.0px;width:63px">6</div>
<div class="t r" style="left:734px;top:425.0px;width:63px">0</div>
<div class="t cl" style="left:30px;top:446.0px;width:63px"><span>YTD</span></div>
<div class="t r" style="left:94px;top:445.0px;width:63px">2</div>
<div class="t r" style="left:158px;top:445.0px;width:63px">0</div>
<div class="t r" style="left:222px;top:445.0px;width:63px">269</div>
<div class="t r" style="left:286px;top:445.0px;width:63px">0</div>
<div class="t r" style="left:350px;top:445.0px;width:63px">0</div>
<div class="t r" style="left:414px;top:445.0px;width:63px">0</div>
<div class="t r" style="left:478px;top:445.0px;width:63px">0</div>
<div class="t r" style="left:542px;top:445.0px;width:63px">0</div>
<div class="t r" style="left:606px;top:445.0px;width:63px">0</div>
<div class="t r" style="left:670px;top:445.0px;width:63px">0</div>
<div class="t r" style="left:734px;top:445.0px;width:63px">0</div>
<div class="t cl" style="left:30px;top:466.0px;width:63px"><span>YTD</span></div>
<div class="t r" style="left:94px;top:465.0px;width:63px">3</div>
<div class="t r" style="left:158px;top:465.0px;width:63px">0</div>
<div class="t r" style="left:222px;top:465.0px;width:63px">0</div>
<div class="t r" style="left:286px;top:465.0px;width:63px">0</div>
<div class="t r" style="left:350px;top:465.0px;width:63px">0</div>
<div class="t r" style="left:414px;top:465.0px;width:63px">0</div>
<div class="t r" style="left:478px;top:465.0px;width:63px">0</div>
<div class="t r" style="left:542px;top:465.0px;width:63px">0</div>
<div class="t r" style="left:606px;top:465.0px;width:63px">0</div>
<div class="t r" style="left:670px;top:465.0px;width:63px">0</div>
<div class="t r" style="left:734px;top:465.0px;width:63px">0</div>
<div class="a" style="left:28px;top:222px;width:67px;height:23px;border:2px solid #217346"></div>
<div class="a" style="left:90px;top:240px;width:7px;height:7px;background:#fff"></div>
<div class="a" style="left:91px;top:241px;width:5px;height:5px;background:#217346"></div>
<div class="a" style="left:4px;top:502px;width:863px;height:29px;background:#e6e6e6"></div>
<div class="a" style="left:4px;top:502px;width:863px;height:1px;background:#8f8f8f"></div>
<div class="a" style="left:4px;top:530px;width:863px;height:1px;background:#c6c6c6"></div>
<svg class="a" style="left:30px;top:511px" width="6" height="9"><path d="M5 0.5v8l-4.5-4z" fill="#c4c4c4"/></svg>
<svg class="a" style="left:59.5px;top:511px" width="6" height="9"><path d="M0.5 0.5v8l4.5-4z" fill="#b0b0b0"/></svg>
<div class="a" style="left:104px;top:502px;width:137px;height:25px;background:#fff;border-left:1px solid #8f8f8f;border-right:1px solid #8f8f8f"></div>
<div class="a" style="left:104px;top:525px;width:137px;height:2px;background:#217346"></div>
<div class="a" style="left:116px;top:507px;font-size:13px;font-weight:bold;color:#217346;line-height:16px">Monthly Snapshot</div>
<svg class="a" style="left:273px;top:507px" width="18" height="18"><circle cx="9" cy="9" r="7.3" fill="none" stroke="#777" stroke-width="1.3"/><path d="M9 4.5v9M4.5 9h9" stroke="#777" stroke-width="1.5"/></svg>
</body></html>
